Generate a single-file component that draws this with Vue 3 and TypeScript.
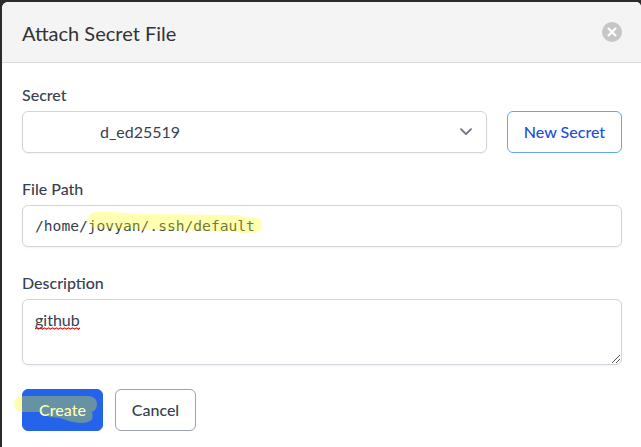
<script setup lang="ts">
import { ref } from 'vue'

const secret = ref('d_ed25519')
const filePath = ref('/home/jovyan/.ssh/default')
const description = ref('github')
</script>

<template>
  <div class="backdrop">
    <section class="dialog">
      <header class="header">
        <h1 class="title">Attach Secret File</h1>
        <button class="close" type="button">
          <svg width="20" height="20" viewBox="0 0 20 20">
            <circle cx="10" cy="10" r="10" fill="#c6c6c6" />
            <path d="M6.8 6.8l6.4 6.4M13.2 6.8l-6.4 6.4" stroke="#fff" stroke-width="2.3" stroke-linecap="square" />
          </svg>
        </button>
      </header>
      <form class="body">
        <div class="label">Secret</div>
        <div class="row">
          <div class="field select">
            <span>{{ secret }}</span>
            <svg width="12" height="8" viewBox="0 0 12 8">
              <path d="M1 1.2l5 5 5-5" fill="none" stroke="#6b7280" stroke-width="1.8" stroke-linecap="round" stroke-linejoin="round" />
            </svg>
          </div>
          <button class="btn new" type="button">New Secret</button>
        </div>
        <div class="label second">File Path</div>
        <div class="field path">
          <span>{{ filePath }}</span>
          <svg class="marker path-marker" width="176" height="24" viewBox="0 0 176 24">
            <path d="M1 7Q3 1 9 1L25 1L50 3L153 4Q156 6 165 6C172 6 175 10 175 14C175 19 171 22 164 22L153 22Q148 20 140 20L56 19Q45 17 33 18L8 17Q1 16 1 7Z" fill="#ff0" fill-opacity=".3" />
          </svg>
        </div>
        <div class="label third">Description</div>
        <div class="field area">
          <span class="word">{{ description }}
            <svg class="squiggle" width="45" height="3" viewBox="0 0 45 3">
              <path d="M0 2L1.5 .8L3.5 2.2L5.5 .8L7.5 2.2L9.5 .8L11.5 2.2L13.5 .8L15.5 2.2L17.5 .8L19.5 2.2L21.5 .8L23.5 2.2L25.5 .8L27.5 2.2L29.5 .8L31.5 2.2L33.5 .8L35.5 2.2L37.5 .8L39.5 2.2L41.5 .8L43.5 2.2L45 1" fill="none" stroke="#f00" stroke-width="1.1" />
            </svg>
          </span>
          <svg class="grip" width="8" height="8" viewBox="0 0 8 8" shape-rendering="crispEdges">
            <path d="M0 7h1v1H0zM1 6h1v1H1zM2 5h1v1H2zM3 4h1v1H3zM4 3h1v1H4zM5 2h1v1H5zM6 1h1v1H6zM7 0h1v1H7zM4 7h1v1H4zM5 6h1v1H5zM6 5h1v1H6zM7 4h1v1H7z" fill="#555" />
          </svg>
        </div>
        <div class="actions">
          <button class="btn create" type="button">
            Create
            <svg class="marker create-marker" width="84" height="28" viewBox="0 0 84 28">
              <path d="M8 0H74C80 0 83 4 83 8C83 12 81 15 78 16Q80 23 76 25C71 28 62 27 55 25L46 22L36 21Q31 18 25 16L8 16C3 16 0 12 0 8S3 0 8 0Z" fill="#ff0" fill-opacity=".3" />
            </svg>
          </button>
          <button class="btn cancel" type="button">Cancel</button>
        </div>
      </form>
    </section>
  </div>
</template>

<style>
body {
  margin: 0;
  overflow: hidden;
}
</style>

<style scoped>
* {
  box-sizing: border-box;
}
.backdrop {
  height: 447px;
  padding: 2px 0 0 2px;
  background: #2c2a2b;
  font: 16px/24px Lato, sans-serif;
  color: #374151;
}
.dialog {
  height: 445px;
  background: #fff;
  border-radius: 6px 5px 0 0;
  overflow: hidden;
}
.header {
  display: flex;
  align-items: center;
  justify-content: space-between;
  height: 61px;
  padding: 0 19px 0 20px;
  background: #f4f4f4;
  border-bottom: 1px solid #d9d9d9;
}
.title {
  margin: 1px 0 0;
  font-size: 20px;
  font-weight: 400;
  line-height: 28px;
  color: #333;
}
.close {
  display: block;
  width: 20px;
  height: 20px;
  padding: 0;
  border: 0;
  background: none;
}
.close svg {
  display: block;
}
.body {
  padding: 20px 19px 0 20px;
}
.label {
  height: 28px;
  font-weight: 500;
}
.second {
  margin-top: 24px;
}
.third {
  margin-top: 24px;
}
.row {
  display: flex;
  gap: 20px;
}
.field {
  position: relative;
  height: 42px;
  padding: 8px 12px;
  border: 1px solid #d1d5db;
  border-radius: 6px;
  background: #fff;
  box-shadow: 0 1px 2px rgba(0, 0, 0, 0.05);
}
.select {
  flex: 1;
  display: flex;
  align-items: center;
  justify-content: space-between;
  padding: 0 14px 0 77px;
}
.path {
  font-family: "DejaVu Sans Mono", monospace;
  font-size: 14.61px;
}
.area {
  height: 66px;
}
.word {
  position: relative;
}
.squiggle {
  position: absolute;
  left: 0;
  bottom: -1px;
}
.grip {
  position: absolute;
  right: 1px;
  bottom: 1px;
}
.marker {
  position: absolute;
  pointer-events: none;
}
.path-marker {
  left: 64px;
  top: 5px;
}
.create-marker {
  left: -9px;
  top: 6px;
}
.actions {
  display: flex;
  gap: 12px;
  margin-top: 24px;
}
.btn {
  position: relative;
  height: 42px;
  padding: 0;
  border: 1px solid #9ca3af;
  border-radius: 6px;
  background: #fff;
  font: 500 16px/24px Lato, sans-serif;
  color: #374151;
}
.new {
  width: 115px;
  border-color: #60a5fa;
  color: #1d4ed8;
}
.create {
  width: 81px;
  border-color: #2563eb;
  background: #2563eb;
  color: #fff;
}
.cancel {
  width: 81px;
}
</style>
